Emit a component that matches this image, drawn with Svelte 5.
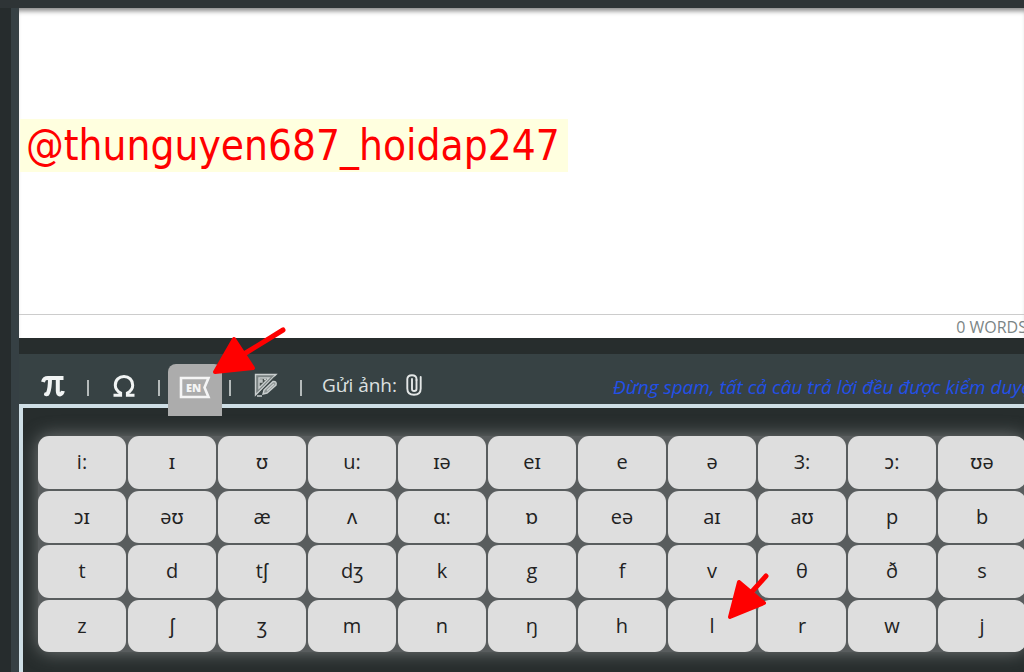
<script>
  const symbols = [
    'i:', 'ɪ', 'ʊ', 'u:', 'ɪə', 'eɪ', 'e', 'ə', '3:', 'ɔ:', 'ʊə',
    'ɔɪ', 'əʊ', 'æ', 'ʌ', 'ɑ:', 'ɒ', 'eə', 'aɪ', 'aʊ', 'p', 'b',
    't', 'd', 'tʃ', 'dʒ', 'k', 'g', 'f', 'v', 'θ', 'ð', 's',
    'z', 'ʃ', 'ʒ', 'm', 'n', 'ŋ', 'h', 'l', 'r', 'w', 'j'
  ];
  const watermark = '@thunguyen687_hoidap247';
  let typed = $state('');
</script>

<main class="page">
  <section class="composer">
    <div class="editor">
      <div class="canvas" contenteditable="true" role="textbox" tabindex="0" aria-label="Câu trả lời"><mark>{watermark}{typed}</mark></div>
      <div class="status">0 WORDS</div>
    </div>

    <div class="toolbar">
      <button class="tool pi" aria-label="Công thức">
        <svg width="24" height="24" viewBox="0 0 24 24" fill="none" stroke="#f1f4f4">
          <path d="M2 9C3 5.200 4.500 5 7 5H22.500" stroke-width="4" />
          <path d="M9 5C9 12 8.300 17 7 20Q6.400 21.600 5 21.200" stroke-width="4" stroke-linecap="round" />
          <path d="M16.800 5V18Q16.900 21.600 19 21.400Q21.200 21.200 21.800 18" stroke-width="4" />
        </svg>
      </button>
      <span class="bar"></span>
      <button class="tool omega" aria-label="Ký hiệu">
        <svg width="24" height="24" viewBox="0 0 24 24" fill="none" stroke="#f1f4f4" stroke-width="3">
          <path d="M1.500 22.300H8.600V20C5 18 3.300 15.400 3.300 12.200C3.300 7 7 3.500 12 3.500S20.700 7 20.700 12.200C20.700 15.400 19 18 15.400 20V22.300H22.500" />
        </svg>
      </button>
      <span class="bar"></span>
      <button class="tool active" aria-label="Phiên âm tiếng Anh">
        <svg width="32" height="24" viewBox="0 0 32 24">
          <path d="M2 2H29.500L25.500 11.500L29.500 21H2Z" fill="none" stroke="#f5f5f5" stroke-width="2.600" />
          <text x="7" y="15.500" font-size="11" font-weight="800" fill="#f5f5f5">EN</text>
        </svg>
      </button>
      <span class="bar"></span>
      <button class="tool draw" aria-label="Vẽ hình">
        <svg width="24" height="24" viewBox="0 0 24 24" fill="none" stroke="#c9cece" stroke-width="1.400">
          <path d="M1.500 1.500H22L1.500 22Z" fill="#7b8383" />
          <path d="M5 5H15L5 15Z" fill="#49514f" />
          <path d="M6 7H8V9H6ZM10 6.500H12" />
          <path d="M6 20L21 4" stroke="#3c4647" stroke-width="1.600" />
          <path d="M10 17L19 8.500Q23 8 22 12L13 20L9 21Z" fill="#8d9494" />
          <path d="M13 17.500L20 11M3 23H8" />
        </svg>
      </button>
      <span class="bar"></span>
      <button class="attach">
        <span>Gửi ảnh:</span>
        <svg width="16" height="22" viewBox="0 0 16 22" fill="none" stroke="#e4e7e7" stroke-width="1.900" stroke-linecap="round">
          <path d="M10.500 6V15Q10.500 17 8.200 17T6 15V5" />
          <path d="M10.500 6V5Q10.500 1.200 6 1.200T1.300 5V14.500Q1.300 20.700 8 20.700T14.700 14.500V3" />
        </svg>
      </button>
      <p class="notice">Đừng spam, tất cả câu trả lời đều được kiểm duyệt</p>
    </div>

    <div class="panel">
      <div class="keys">
        {#each symbols as symbol}
          <button class="key" onclick={() => (typed += symbol)}>{symbol}</button>
        {/each}
      </div>
    </div>
  </section>

  <svg class="arrow first" width="74" height="52" viewBox="0 0 74 52" aria-hidden="true">
    <path d="M71 4L32 28" stroke="#f00" stroke-width="5" stroke-linecap="round" />
    <path d="M3 46L22 13L41 42Z" fill="#f00" stroke="#f00" stroke-width="4" stroke-linejoin="round" />
  </svg>
  <svg class="arrow second" width="44" height="48" viewBox="0 0 44 48" aria-hidden="true">
    <path d="M39 4L22 23" stroke="#f00" stroke-width="5" stroke-linecap="round" />
    <path d="M3 45L12 10L37 31Z" fill="#f00" stroke="#f00" stroke-width="4" stroke-linejoin="round" />
  </svg>
</main>

<style>
  :global(body) {
    margin: 0;
    background: #262c2d;
    overflow: hidden;
  }
  .page {
    position: relative;
    box-sizing: border-box;
    min-height: 100vh;
    padding-left: 11px;
    border-top: 8px solid #2e3436;
    overflow: hidden;
    display: flex;
    font-family: "Open Sans", "Noto Sans", sans-serif;
  }
  .composer {
    flex: 1;
    min-width: 0;
    display: flex;
    flex-direction: column;
    border-left: 8px solid #364044;
  }
  .editor {
    background: #fff;
    box-shadow: inset 0 6px 5px -3px #888;
    border-bottom: 16px solid #272d2d;
  }
  .canvas {
    box-sizing: border-box;
    height: 306px;
    padding-top: 111px;
    outline: none;
    font: 42px/53px "DejaVu Sans Condensed", "Noto Sans", sans-serif;
    white-space: nowrap;
  }
  mark {
    display: inline-block;
    padding: 0 8px 0 6px;
    margin-left: 1px;
    background: #ffffdf;
    color: #f00;
  }
  .status {
    display: flex;
    justify-content: flex-end;
    margin-right: -3px;
    border-top: 1px solid #ccc;
    color: #7b8585;
    font-size: 16px;
    line-height: 22px;
    padding-top: 1px;
    white-space: nowrap;
  }
  .toolbar {
    display: flex;
    align-items: center;
    height: 50px;
    padding-top: 12px;
    box-sizing: border-box;
    background: #374244;
    white-space: nowrap;
  }
  button {
    border: 0;
    padding: 0;
    font: inherit;
    cursor: pointer;
  }
  .tool {
    flex: none;
    display: flex;
    align-items: center;
    justify-content: center;
    width: 68px;
    height: 38px;
    background: none;
  }
  .bar {
    flex: none;
    width: 2px;
    height: 16px;
    margin-top: 6px;
    background: #b5bbbb;
  }
  .tool.omega {
    width: 69px;
  }
  .tool.active {
    align-self: flex-start;
    box-sizing: border-box;
    width: 54px;
    height: 52px;
    margin: -2px 7px 0 8px;
    padding-bottom: 4px;
    border-radius: 8px 8px 0 0;
    background: #acacac;
    z-index: 1;
  }
  .tool.draw {
    width: 69px;
  }
  .attach {
    flex: none;
    display: flex;
    align-items: center;
    gap: 9px;
    margin-left: 20px;
    background: none;
    color: #dde0e0;
    font-size: 19px;
    line-height: 38px;
  }
  .notice {
    flex: none;
    margin: 4px -13px 0 auto;
    color: #2250e8;
    font-size: 19px;
    font-style: italic;
  }
  .panel {
    flex: 1;
    padding: 28px 0 20px 15px;
    border: solid #cfdfe6;
    border-width: 4px 0 0 4px;
    background: #272d2d;
  }
  .keys {
    display: grid;
    grid-template-columns: repeat(11, 1fr);
    grid-template-rows: repeat(4, 1fr);
    gap: 2px;
    height: 216px;
    margin-right: -2px;
    border-radius: 12px;
    background: #595d5e;
    box-shadow: 0 0 18px #777b7b;
  }
  .key {
    min-width: 0;
    border-radius: 11px;
    background: #dedede;
    color: #222;
    font-size: 20px;
    line-height: 28px;
    font-family: "Open Sans", "Noto Sans", sans-serif;
  }
  .arrow {
    position: absolute;
    z-index: 2;
    pointer-events: none;
  }
  .first {
    left: 212px;
    top: 318px;
  }
  .second {
    left: 727px;
    top: 564px;
  }
</style>
